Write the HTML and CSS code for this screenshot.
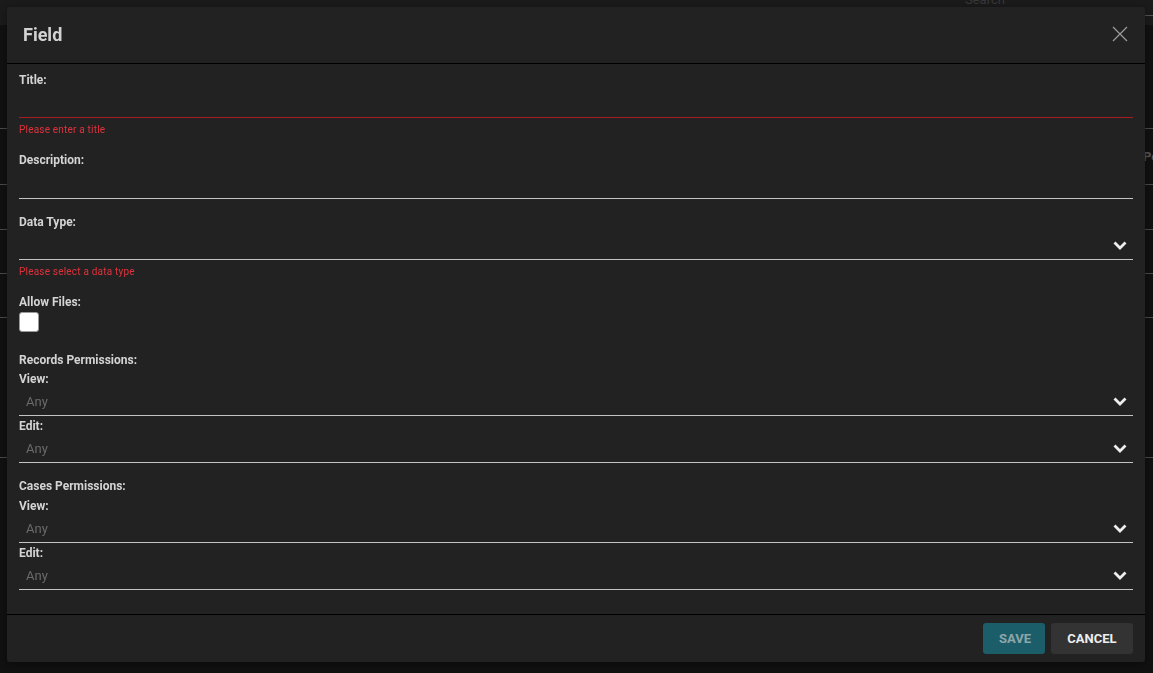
FILE: index.html
```html
<!DOCTYPE html>
<html lang="en">
<head>
    <meta charset="UTF-8">
    <meta name="viewport" content="width=device-width, initial-scale=1.0">
    <title>Field</title>
    <link rel="stylesheet" href="styles.css">
</head>
<body>
  <!-- page behind the dialog -->
  <div class="page">
    <div class="topbar">
      <span class="search">Search</span>
    </div>
    <div class="table">
      <div class="row r1"></div>
      <div class="row r2"><span class="head-cell">Pe</span></div>
      <div class="row r3"></div>
      <div class="row r4"></div>
      <div class="row r5"></div>
      <div class="row r6"></div>
    </div>
  </div>

  <div class="modal">
    <div class="modal-header">
      <h2 class="modal-title">Field</h2>
      <button class="close" aria-label="Close">
        <svg width="16" height="16" viewBox="0 0 16 16">
          <path d="M1 1 L15 15 M15 1 L1 15" stroke="#9a9a9a" stroke-width="1.3" fill="none"/>
        </svg>
      </button>
    </div>

    <div class="modal-body">
      <label class="lbl">Title:</label>
      <div class="input invalid h30"></div>
      <div class="error">Please enter a title</div>

      <label class="lbl mt17">Description:</label>
      <div class="input h31"></div>

      <label class="lbl mt16">Data Type:</label>
      <div class="input select h30">
        <span class="val"></span>
        <svg class="chev" width="14" height="9" viewBox="0 0 14 9"><polyline points="1.5,1.5 7,7 12.5,1.5" stroke="#eee" stroke-width="2.8" fill="none"/></svg>
      </div>
      <div class="error">Please select a data type</div>

      <label class="lbl mt17">Allow Files:</label>
      <span class="checkbox"></span>

      <label class="lbl mt21">Records Permissions:</label>
      <label class="lbl mt5">View:</label>
      <div class="input select h29">
        <span class="val">Any</span>
        <svg class="chev" width="14" height="9" viewBox="0 0 14 9"><polyline points="1.5,1.5 7,7 12.5,1.5" stroke="#eee" stroke-width="2.8" fill="none"/></svg>
      </div>
      <label class="lbl mt3">Edit:</label>
      <div class="input select h29">
        <span class="val">Any</span>
        <svg class="chev" width="14" height="9" viewBox="0 0 14 9"><polyline points="1.5,1.5 7,7 12.5,1.5" stroke="#eee" stroke-width="2.8" fill="none"/></svg>
      </div>

      <label class="lbl mt16">Cases Permissions:</label>
      <label class="lbl mt6">View:</label>
      <div class="input select h29">
        <span class="val">Any</span>
        <svg class="chev" width="14" height="9" viewBox="0 0 14 9"><polyline points="1.5,1.5 7,7 12.5,1.5" stroke="#eee" stroke-width="2.8" fill="none"/></svg>
      </div>
      <label class="lbl mt3">Edit:</label>
      <div class="input select h29">
        <span class="val">Any</span>
        <svg class="chev" width="14" height="9" viewBox="0 0 14 9"><polyline points="1.5,1.5 7,7 12.5,1.5" stroke="#eee" stroke-width="2.8" fill="none"/></svg>
      </div>
    </div>

    <div class="modal-footer">
      <button class="btn save">Save</button>
      <button class="btn cancel">Cancel</button>
    </div>
  </div>
</body>
</html>
```

FILE: styles.css
```css
body {
    margin: 0;
    padding: 0;
    background-color: #111;
    font-family: Roboto, "Liberation Sans", Arial, sans-serif;
    overflow: hidden;
}

.page {
    height: 673px;
}

.topbar {
    height: 25px;
    background-color: #1b1b1b;
    position: relative;
}

.search {
    position: absolute;
    left: 965px;
    top: -8px;
    font-size: 13px;
    color: #383838;
}

.topbar::after {
    content: "";
    position: absolute;
    left: 1140px;
    right: 0;
    top: 15px;
    border-top: 1px solid #555;
}

.row {
    border-bottom: 1px solid #4a4a4a;
}

.r1 { height: 103px; }
.r2 { height: 55px; display: flex; align-items: center; }
.r3 { height: 44px; }
.r4 { height: 43px; }
.r5 { height: 43px; }
.r6 { height: 139px; }

.head-cell {
    padding-left: 1143px;
    font-size: 13px;
    font-weight: bold;
    color: #555;
    white-space: nowrap;
}

/* dialog */
.modal {
    position: fixed;
    top: 7px;
    left: 7px;
    width: 1138px;
    height: 655px;
    background-color: #222;
    border-radius: 3px;
    display: flex;
    flex-direction: column;
    box-shadow: 0 2px 8px rgba(0, 0, 0, 0.4);
}

.modal-header {
    height: 57px;
    border-bottom: 1px solid #000;
    display: flex;
    align-items: center;
    justify-content: space-between;
    padding: 0 17px 2px 16px;
    box-sizing: border-box;
    flex: none;
}

.modal-title {
    margin: 0;
    font-size: 18px;
    font-weight: bold;
    color: #d2d2d2;
}

.close {
    background: none;
    border: none;
    padding: 0;
    width: 16px;
    height: 16px;
    cursor: pointer;
}

.modal-body {
    flex: 1;
    padding: 9px 12px 0 12px;
}

.lbl {
    display: block;
    font-size: 12px;
    line-height: 14px;
    font-weight: bold;
    color: #d4d4d4;
}

.mt3 { margin-top: 3px; }
.mt5 { margin-top: 5px; }
.mt6 { margin-top: 6px; }
.mt16 { margin-top: 16px; }
.mt17 { margin-top: 17px; }
.mt21 { margin-top: 21px; }

.input {
    border-bottom: 1px solid #c4c4c4;
}

.h29 { height: 29px; }
.h30 { height: 30px; }
.h31 { height: 31px; }

.input.invalid {
    border-bottom-color: #a61e22;
}

.select {
    display: flex;
    align-items: center;
    justify-content: space-between;
}

.val {
    padding-left: 7px;
    margin-top: 2px;
    font-size: 13px;
    color: #6a6a6a;
}

.chev {
    margin-right: 6px;
    margin-top: 2px;
}

.error {
    margin-top: 6px;
    font-size: 10px;
    line-height: 12px;
    letter-spacing: 0.2px;
    color: #e0323c;
}

.checkbox {
    display: block;
    margin-top: 3px;
    width: 18px;
    height: 18px;
    background-color: #fff;
    border: 1px solid #999;
    border-radius: 3px;
}

.modal-footer {
    height: 48px;
    border-top: 1px solid #000;
    box-sizing: border-box;
    display: flex;
    align-items: center;
    justify-content: flex-end;
    gap: 6px;
    padding: 0 12px;
    flex: none;
}

.btn {
    height: 31px;
    padding: 0 16px;
    border: none;
    border-radius: 3px;
    font-family: Roboto, "Liberation Sans", Arial, sans-serif;
    font-size: 13px;
    font-weight: bold;
    text-transform: uppercase;
    cursor: pointer;
}

.save {
    width: 62px;
    background-color: #1b5e69;
    color: #8ea6aa;
}

.cancel {
    width: 82px;
    background-color: #333;
    color: #eee;
}
```
